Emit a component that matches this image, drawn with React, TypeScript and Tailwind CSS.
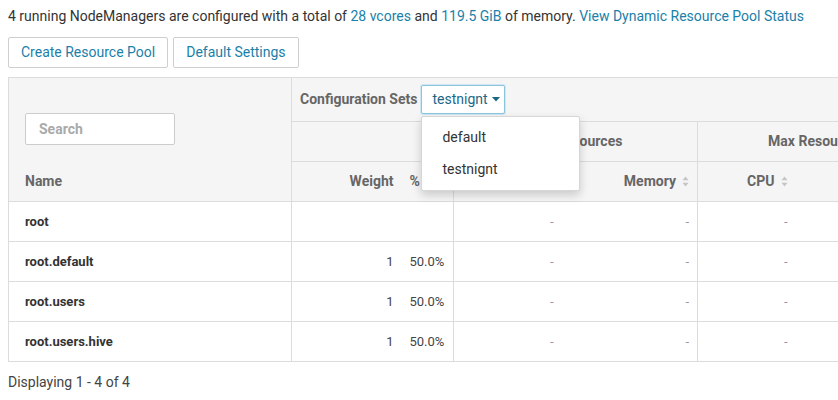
import React from "react";

function SortIcon() {
  return (
    <svg width="7" height="11" viewBox="0 0 7 11" className="inline-block ml-[6px] align-[-1px]">
      <path d="M3.5 0.5 L6.5 4.2 L0.5 4.2 Z" fill="#c4c4c4" />
      <path d="M3.5 10.5 L6.5 6.8 L0.5 6.8 Z" fill="#c4c4c4" />
    </svg>
  );
}

const rows = [
  { name: "root", w: "", p: "" },
  { name: "root.default", w: "1", p: "50.0%" },
  { name: "root.users", w: "1", p: "50.0%" },
  { name: "root.users.hive", w: "1", p: "50.0%" },
];

export default function App() {
  const font = { fontFamily: "Roboto, 'Liberation Sans', sans-serif" };
  return (
    <div className="w-[838px] h-[400px] bg-white pl-2 pt-[6px] text-[14px] text-[#333]" style={font}>
      <p className="leading-5 whitespace-nowrap">
        4 running NodeManagers are configured with a total of{" "}
        <span className="text-[#1a7fa9]">28 vcores</span> and{" "}
        <span className="text-[#1a7fa9]">119.5 GiB</span> of memory.{" "}
        <span className="text-[#1a7fa9]">View Dynamic Resource Pool Status</span>
      </p>
      <div className="mt-[11px] flex gap-[5px]">
        <button className="h-[31px] px-3 border border-[#cfcfcf] rounded-[2px] bg-white text-[#1a7fa9] text-[14px]">
          Create Resource Pool
        </button>
        <button className="h-[31px] px-3 border border-[#cfcfcf] rounded-[2px] bg-white text-[#1a7fa9] text-[14px]">
          Default Settings
        </button>
      </div>
      <div className="mt-[9px] overflow-hidden relative">
        <table className="border-collapse table-fixed w-[928px] text-[13px]">
          <colgroup>
            <col className="w-[283px]" />
            <col className="w-[110px]" />
            <col className="w-[52px]" />
            <col className="w-[108px]" />
            <col className="w-[136px]" />
            <col className="w-[98px]" />
            <col className="w-[140px]" />
          </colgroup>
          <thead className="bg-[#f5f5f5] text-[#666] font-bold text-[14px]">
            <tr className="h-[44px]">
              <th rowSpan={3} className="border border-[#dcdcdc] align-top text-left p-0">
                <div className="flex flex-col pl-4 pt-[35px]">
                  <div className="w-[150px] h-[32px] border border-[#cccccc] rounded-[2px] bg-white flex items-center pl-[13px] text-[#aaa] font-bold text-[14px]">
                    Search
                  </div>
                  <div className="mt-[26px] leading-5">Name</div>
                </div>
              </th>
              <th colSpan={6} className="border border-[#dcdcdc] text-left pl-2 font-bold">
                <div className="flex items-center gap-[4px] -mt-px">
                  <span>Configuration Sets</span>
                  <div className="relative">
                    <div className="h-[29px] w-[84px] border border-[#8cc6de] rounded-[2px] bg-white shadow-[0_0_0_1px_#cfe7f2] flex items-center pl-[10px] text-[#1b6886] font-normal text-[14px]">
                      testnignt
                      <svg width="8" height="5" viewBox="0 0 8 5" className="ml-[4px]">
                        <path d="M0 0 L8 0 L4 4.5 Z" fill="#1b6886" />
                      </svg>
                    </div>
                    <div className="absolute left-0 top-[31px] w-[159px] h-[75px] bg-white border border-[#d6d6d6] rounded-[2px] shadow-[0_4px_10px_rgba(0,0,0,0.18)] pt-[5px] z-10 text-[#333] font-normal text-[14px]">
                      <div className="h-[32px] flex items-center pl-[20px]">default</div>
                      <div className="h-[32px] flex items-center pl-[20px]">testnignt</div>
                    </div>
                  </div>
                </div>
              </th>
            </tr>
            <tr className="h-[40px]">
              <th colSpan={2} className="border border-[#dcdcdc]"></th>
              <th colSpan={2} className="border border-[#dcdcdc] text-center">Min Resources</th>
              <th colSpan={2} className="border border-[#dcdcdc] text-center">Max Resources</th>
            </tr>
            <tr className="h-[40px]">
              <th className="border-y border-l border-[#dcdcdc] text-right pr-2">Weight</th>
              <th className="border-y border-r border-[#dcdcdc] text-left pl-2">
                %<SortIcon />
              </th>
              <th className="border-y border-l border-[#dcdcdc] text-right pr-2">
                CPU<SortIcon />
              </th>
              <th className="border-y border-r border-[#dcdcdc] text-right pr-2">
                Memory<SortIcon />
              </th>
              <th className="border-y border-l border-[#dcdcdc] text-right pr-2">
                CPU<SortIcon />
              </th>
              <th className="border-y border-r border-[#dcdcdc] text-right pr-2">
                Memory<SortIcon />
              </th>
            </tr>
          </thead>
          <tbody>
            {rows.map((r) => (
              <tr key={r.name} className="h-[40px]">
                <td className="border border-[#dcdcdc] pl-4 font-bold text-[#333]">{r.name}</td>
                <td className="border-y border-l border-[#dcdcdc] text-right pr-2 text-[#444]">{r.w}</td>
                <td className="border-y border-r border-[#dcdcdc] text-left pl-2 text-[#444]">{r.p}</td>
                <td className="border-y border-l border-[#dcdcdc] text-right pr-2 text-[#999]">-</td>
                <td className="border-y border-r border-[#dcdcdc] text-right pr-2 text-[#999]">-</td>
                <td className="border-y border-l border-[#dcdcdc] text-right pr-2 text-[#999]">-</td>
                <td className="border-y border-r border-[#dcdcdc] text-right pr-2 text-[#999]">-</td>
              </tr>
            ))}
          </tbody>
        </table>
      </div>
      <p className="mt-[10px] leading-5 text-[#444]">Displaying 1 - 4 of 4</p>
    </div>
  );
}
